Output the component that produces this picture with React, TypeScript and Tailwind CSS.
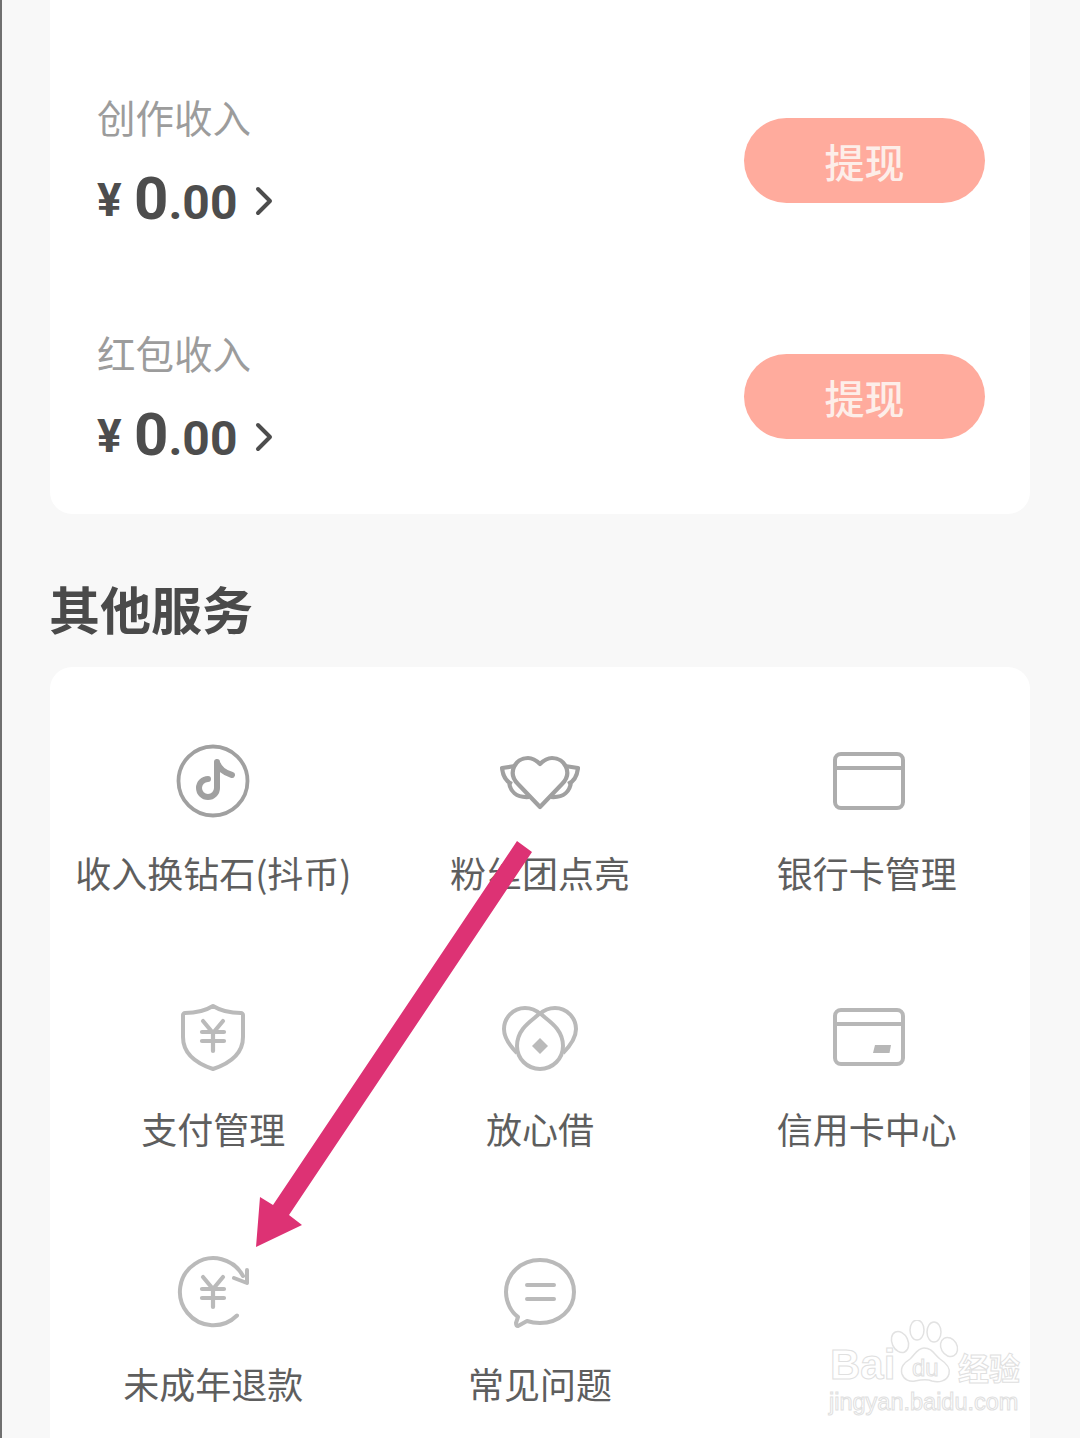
import React from 'react'

const CJK = "font-['Noto_Sans_CJK_SC','Noto_Sans',sans-serif]"

const Income: React.FC<{ label: string }> = ({ label }) => (
  <div className="h-[236px] flex items-start justify-between pl-[47px] pr-[45px]">
    <div>
      <div className="text-[38.5px] leading-[48px] text-[#9c9c9c] mt-[92px]">{label}</div>
      <div className="flex items-center h-[60px] mt-[31px] text-[#4d4d4d] font-['Roboto',sans-serif] font-bold">
        <span className="text-[46px] leading-none font-bold mr-[11px] w-[26px] -mt-[3px]">¥</span>
        <span className="flex items-baseline">
          <span className="text-[60px] leading-[60px]">0</span>
          <span className="text-[48px] leading-[60px]">.00</span>
        </span>
        <svg className="ml-[18px]" width="18" height="32" viewBox="0 0 18 32" fill="none">
          <path d="M3 4l12 12L3 28" stroke="#4d4d4d" strokeWidth="4" strokeLinecap="round" strokeLinejoin="round" />
        </svg>
      </div>
    </div>
    <button className="mt-[118px] w-[241px] h-[85px] rounded-full bg-[#ffab9d] text-[#fdeee9] text-[40px] leading-none font-medium">
      提现
    </button>
  </div>
)

const icons: Record<string, React.ReactNode> = {
  tiktok: (
    <>
      <circle cx="40" cy="40" r="34.500" stroke="#a0a0a0" strokeWidth="3.8" />
      <path d="M44 21v26a9 9 0 1 1-9-9M44 21c2 7 8 11 15 13" stroke="#a0a0a0" strokeWidth="6" strokeLinecap="round" strokeLinejoin="round" />
    </>
  ),
  heart: (
    <>
      <path d="M40 66L18 43C7 32 15 17 28 17c5 0 9 3 12 6 3-3 7-6 12-6 13 0 21 15 10 26z" stroke="#a0a0a0" strokeWidth="4.200" strokeLinejoin="round" />
      <path d="M15 25L2 27c1 9 5 14 10 16M65 25l13 2c-1 9-5 14-10 16M9 41c1 9 7 16 20 15M71 41c-1 9-7 16-20 15" stroke="#a0a0a0" strokeWidth="4.200" strokeLinejoin="round" />
    </>
  ),
  card: (
    <>
      <rect x="8" y="13" width="68" height="54" rx="6" stroke="#adadad" strokeWidth="4" />
      <path d="M8 27h68" stroke="#adadad" strokeWidth="4" />
    </>
  ),
  shield: (
    <>
      <path d="M40 9c8 5 18 7 28 7 1 0 2 1 2 2v22c0 16-12 26-30 32C22 66 10 56 10 40V18c0-1 1-2 2-2 10 0 20-2 28-7z" stroke="#bababa" strokeWidth="4" strokeLinejoin="round" />
      <path d="M30 24l10 12 10-12M29 35h22M29 44h22M40 36v18" stroke="#bababa" strokeWidth="4.200" strokeLinecap="round" />
    </>
  ),
  loan: (
    <>
      <path d="M40 17c-5-5-10-6-15-6C13 11 4 21 4 32c0 9 5 16 13 24M40 17c5-5 10-6 15-6 12 0 21 10 21 21 0 9-5 16-13 24" stroke="#bababa" strokeWidth="4" strokeLinejoin="round" />
      <path d="M40 16c5 6 23 14 23 33a23 23 0 0 1-46 0c0-19 18-27 23-33z" stroke="#bababa" strokeWidth="4" strokeLinejoin="round" />
      <path d="M40 41l8 8-8 8-8-8z" fill="#bababa" />
    </>
  ),
  credit: (
    <>
      <rect x="8" y="13" width="68" height="54" rx="6" stroke="#b7b7b7" strokeWidth="4" />
      <path d="M8 27h68" stroke="#b7b7b7" strokeWidth="4" />
      <path d="M48 48h16l-1.500 8H46z" fill="#b7b7b7" />
    </>
  ),
  refund: (
    <>
      <path d="M64 63.500A33.500 33.500 0 1 1 70 24" stroke="#bababa" strokeWidth="4" strokeLinecap="round" />
      <path d="M61 26l13 5 0-13" stroke="#bababa" strokeWidth="4" strokeLinecap="round" strokeLinejoin="round" />
      <path d="M30 25l10 12 10-12M29 37h22M29 46h22M40 37v18" stroke="#bababa" strokeWidth="4.200" strokeLinecap="round" />
    </>
  ),
  faq: (
    <>
      <path d="M40 8c19 0 34 14 34 32S59 71 40 71c-5 0-10-1-13-2l-9 5c-2 0-2-2-2-3l2-6C11 60 6 50 6 40 6 22 21 8 40 8z" stroke="#bababa" strokeWidth="4" strokeLinejoin="round" />
      <path d="M27 33h27M27 47h27" stroke="#bababa" strokeWidth="4" strokeLinecap="round" />
    </>
  ),
}

const services = [
  { key: 'tiktok', name: '收入换钻石(抖币)' },
  { key: 'heart', name: '粉丝团点亮' },
  { key: 'card', name: '银行卡管理' },
  { key: 'shield', name: '支付管理' },
  { key: 'loan', name: '放心借' },
  { key: 'credit', name: '信用卡中心' },
  { key: 'refund', name: '未成年退款' },
  { key: 'faq', name: '常见问题' },
]

export default function App() {
  return (
    <div className={`relative w-[1080px] h-[1438px] overflow-hidden bg-[#f8f8f8] border-l-2 border-[#707070] ${CJK}`}>
      <div className="ml-[48px] w-[980px] h-[514px] bg-white rounded-b-[22px]">
        <Income label="创作收入" />
        <Income label="红包收入" />
      </div>

      <h2 className="ml-[47px] mt-[64px] h-[60px] text-[51px] leading-[60px] font-bold text-[#4a4a4a]">其他服务</h2>

      <div className="ml-[48px] mt-[29px] w-[980px] h-[800px] bg-white rounded-t-[22px] grid grid-cols-3 auto-rows-[255.5px] pt-[74px]">
        {services.map(s => (
          <div key={s.key} className="flex flex-col items-center">
            <svg width="80" height="80" viewBox="0 0 80 80" fill="none">
              {icons[s.key]}
            </svg>
            <div className="mt-[26px] text-[36px] leading-[50px] text-[#5e5e5e] whitespace-nowrap">{s.name}</div>
          </div>
        ))}
      </div>

      {/* annotation arrow */}
      <svg className="absolute left-[-2px] top-0" width="1080" height="1438" viewBox="0 0 1080 1438" fill="none">
        <path d="M517 841L532 852L289 1215L302 1225L256 1247L260 1197L273 1205Z" fill="#dd3274" />
      </svg>

      {/* watermark */}
      <div className="absolute left-[826px] top-[1320px] w-[200px] h-[100px] text-transparent [-webkit-text-stroke:1px_#e0e0e0]">
        <svg className="absolute left-[56px] top-0" width="84" height="66" viewBox="0 0 84 66" fill="none" stroke="#e2e2e2" strokeWidth="1.500">
          <ellipse cx="16" cy="22" rx="8" ry="11" transform="rotate(-25 16 22)" />
          <ellipse cx="33" cy="10" rx="7" ry="10" />
          <ellipse cx="50" cy="12" rx="7" ry="10" />
          <ellipse cx="65" cy="27" rx="8" ry="10" transform="rotate(-30 65 27)" />
          <path d="M40 28c-7 0-9 7-14 11-6 4-10 8-8 15 2 6 8 8 13 7 5-1 12-2 17 0 7 2 15 0 17-7 2-6-3-11-9-15-6-5-8-11-16-11z" />
        </svg>
        <span className="absolute left-[2px] top-[24px] text-[42px] leading-[42px] font-bold font-['Liberation_Sans',sans-serif]">Bai</span>
        <span className="absolute left-[84px] top-[36px] text-[24px] leading-[24px] font-['Liberation_Sans',sans-serif]">du</span>
        <span className="absolute left-[130px] top-[28px] text-[31px] leading-[38px] font-bold">经验</span>
        <span className="absolute left-[1px] top-[67px] text-[23.500px] leading-[30px] font-['Liberation_Sans',sans-serif]">jingyan.baidu.com</span>
      </div>
    </div>
  )
}
